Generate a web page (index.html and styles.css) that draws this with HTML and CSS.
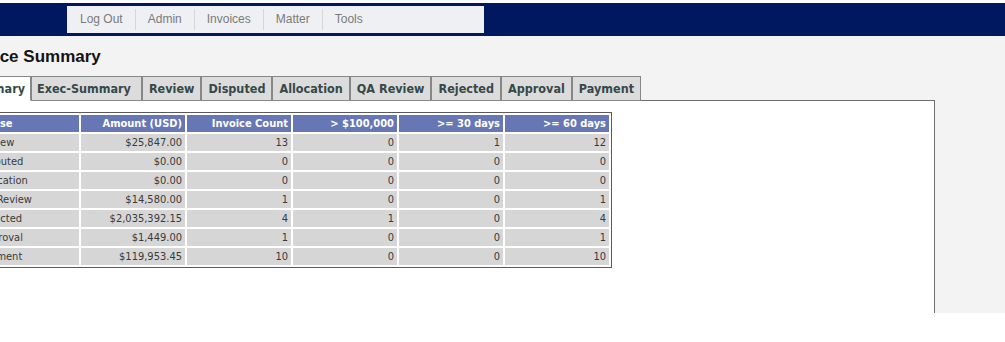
FILE: index.html
```html
<!DOCTYPE html>
<html lang="en">

<head>
  <meta charset="UTF-8" />
  <meta name="viewport" content="width=device-width, initial-scale=1.0" />
  <link rel="stylesheet" href="styles.css">
  <title>Invoice Summary</title>
</head>

<body>
  <!-- top bar -->
  <div class="topbar">
    <ul class="menu">
      <li>Log Out</li>
      <li>Admin</li>
      <li>Invoices</li>
      <li>Matter</li>
      <li>Tools</li>
    </ul>
  </div>

  <div class="main">
    <div class="content">
      <h2 class="title">Invoice Summary</h2>

      <!-- tabs -->
      <ul class="tabs">
        <li class="tab active">Summary</li>
        <li class="tab wide">Exec-Summary</li>
        <li class="tab">Review</li>
        <li class="tab">Disputed</li>
        <li class="tab">Allocation</li>
        <li class="tab">QA Review</li>
        <li class="tab">Rejected</li>
        <li class="tab">Approval</li>
        <li class="tab">Payment</li>
      </ul>

      <div class="panel">
        <table class="summary">
          <thead>
            <tr>
              <th class="first">Phase</th>
              <th>Amount (USD)</th>
              <th>Invoice Count</th>
              <th>&gt; $100,000</th>
              <th>&gt;= 30 days</th>
              <th>&gt;= 60 days</th>
            </tr>
          </thead>
          <tbody>
            <tr><td class="first">Review</td><td>$25,847.00</td><td>13</td><td>0</td><td>1</td><td>12</td></tr>
            <tr><td class="first">Disputed</td><td>$0.00</td><td>0</td><td>0</td><td>0</td><td>0</td></tr>
            <tr><td class="first">Allocation</td><td>$0.00</td><td>0</td><td>0</td><td>0</td><td>0</td></tr>
            <tr><td class="first">QA Review</td><td>$14,580.00</td><td>1</td><td>0</td><td>0</td><td>1</td></tr>
            <tr><td class="first">Rejected</td><td>$2,035,392.15</td><td>4</td><td>1</td><td>0</td><td>4</td></tr>
            <tr><td class="first">Approval</td><td>$1,449.00</td><td>1</td><td>0</td><td>0</td><td>1</td></tr>
            <tr><td class="first">Payment</td><td>$119,953.45</td><td>10</td><td>0</td><td>0</td><td>10</td></tr>
          </tbody>
        </table>
      </div>
    </div>
  </div>
</body>

</html>
```

FILE: styles.css
```css
* {
  box-sizing: border-box;
}

body {
  margin: 0;
  background-color: #fff;
  font-family: "Liberation Sans", Arial, sans-serif;
  overflow: hidden;
}

/* top navy bar */
.topbar {
  margin-top: 3px;
  height: 33px;
  background-color: #00185f;
  padding: 3px 0 0 67px;
}

.menu {
  list-style: none;
  margin: 0;
  padding: 0 0 0 1px;
  width: 417px;
  height: 27px;
  background-color: #eef0f3;
  display: flex;
  align-items: center;
}

.menu li {
  font-size: 12px;
  color: #7b7b7b;
  padding: 0 12px;
  line-height: 21px;
  border-left: 1px solid #d4d6da;
}

.menu li:first-child {
  border-left: none;
}

/* grey page area */
.main {
  background-color: #f3f3f3;
  height: 277px;
  overflow: hidden;
}

.content {
  margin-left: -40px;
  width: 975px;
}

.title {
  margin: 0;
  padding-top: 11px;
  font-size: 17px;
  line-height: 20px;
  font-weight: bold;
  color: #141414;
}

.tabs {
  list-style: none;
  margin: 9px 0 0;
  padding: 0;
  display: flex;
  position: relative;
  z-index: 2;
}

.tab {
  font-family: "DejaVu Sans Condensed", Tahoma, sans-serif;
  font-weight: bold;
  font-size: 12.5px;
  color: #364848;
  background-color: #dcdcdc;
  border: 1px solid #878787;
  height: 25px;
  line-height: 23px;
  padding: 0 6px;
}

.tab.active {
  background-color: #fff;
  border-bottom-color: #fff;
  padding: 0 5px 0 4px;
}

.tab.wide {
  padding: 0 10px 0 5px;
}

/* white panel under tabs */
.panel {
  margin-top: -1px;
  background-color: #fff;
  border: 1px solid #6f6f6f;
  height: 260px;
  padding: 11px 0 0 12px;
}

.summary {
  border: 1px solid #5a5a5a;
  border-spacing: 2px;
  table-layout: fixed;
  font-family: "DejaVu Sans Condensed", Tahoma, sans-serif;
  font-size: 11px;
}

.summary th,
.summary td {
  width: 104px;
  height: 17px;
  padding: 0 3px;
  text-align: right;
  white-space: nowrap;
}

.summary th {
  background-color: #6776b5;
  color: #fff;
  font-weight: bold;
}

.summary td {
  background-color: #d6d6d6;
  color: #3a3a3a;
}

.summary .first {
  width: 103px;
  text-align: left;
}
```
